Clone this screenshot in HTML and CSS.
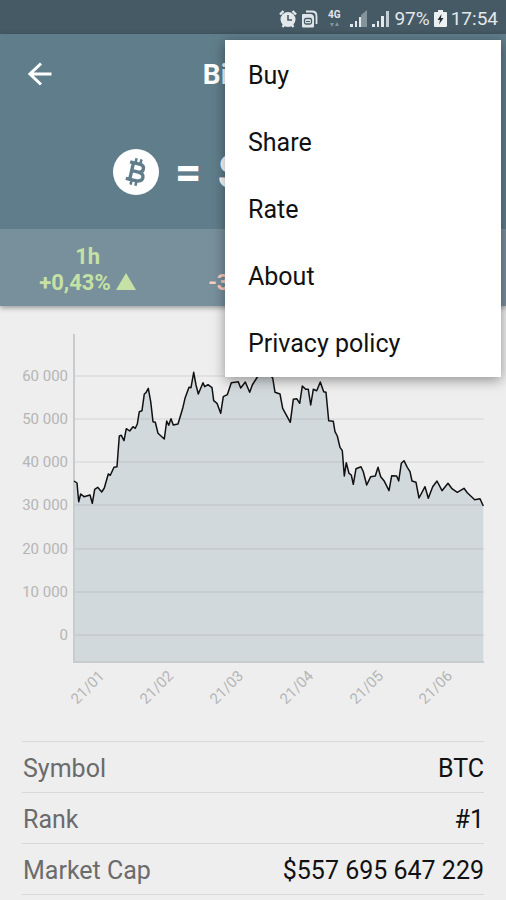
FILE: index.html
```html
<!DOCTYPE html>
<html lang="en">
<head>
	<meta charset="utf-8">
	<meta name="viewport" content="width=device-width, initial-scale=1">
	<title>Bitcoin</title>
	<link rel="stylesheet" href="styles.css">
</head>
<body>
	<div class="statusbar">
		<svg width="18" height="18" viewBox="0 0 18 18">
			<circle cx="9" cy="9.500" r="7.500" fill="#e3e8ea"/>
			<path d="M1 4.500L4.500 1M17 4.500L13.500 1M3.500 17l2-2.500M14.500 17l-2-2.500" stroke="#e3e8ea" stroke-width="2.400"/>
			<path d="M9 5v5h4" fill="none" stroke="#455a64" stroke-width="1.600"/>
		</svg>
		<svg width="17" height="18" viewBox="0 0 17 18">
			<path d="M5 1.500h6q4.500 0 4.500 4.500V14" fill="none" stroke="#dfe5e8" stroke-width="1.800"/>
			<path d="M2 4h7q4 0 4 4v8.500q0 1-1 1H2q-1 0-1-1V5q0-1 1-1z" fill="#dfe5e8"/>
			<rect x="3.500" y="8.500" width="7" height="5.500" rx="1.500" fill="none" stroke="#455a64" stroke-width="1.300"/>
			<path d="M5 11.500h4" stroke="#455a64"/>
		</svg>
		<span class="net">
			<b>4G</b>
			<svg width="9" height="5" viewBox="0 0 9 5"><path d="M0 1h4L2 5zM5 4h4L7 0z" fill="#84949b"/></svg>
		</span>
		<svg width="18" height="17" viewBox="0 0 18 17">
			<path d="M0 14h3v3H0zM5 11h2v6H5z" fill="#e3e8ea"/>
			<path d="M11 5l6-5v17h-6z" fill="#84949b"/>
			<path d="M9 7h2v10H9z" fill="#e3e8ea"/>
		</svg>
		<svg width="18" height="17" viewBox="0 0 18 17">
			<path d="M0 14h3v3H0zM5 11h2v6H5zM9 6h3v11H9z" fill="#e3e8ea"/>
			<path d="M14 1h3v16h-3z" fill="#c3cdd1"/>
		</svg>
		<span>97%</span>
		<svg width="13" height="17" viewBox="0 0 13 17">
			<path d="M4 0h5v2h3q1 0 1 1v13q0 1-1 1H1q-1 0-1-1V3q0-1 1-1h3z" fill="#eef1f2"/>
			<path d="M7.500 4L3.500 10h2.500l-1 4.500 4.500-6.500H7z" fill="#263238"/>
		</svg>
		<span>17:54</span>
	</div>

	<header class="header">
		<div class="toolbar">
			<button class="back" type="button" aria-label="Back">
				<svg width="24" height="24" viewBox="0 0 24 24"><path d="M23.500 12H2M13 1.500L2 12l11 10.500" fill="none" stroke="#fff" stroke-width="3"/></svg>
			</button>
			<h1 class="title">Bitcoin</h1>
		</div>
		<div class="price">
			<svg width="46" height="46" viewBox="0 0 46 46">
				<circle cx="23" cy="23" r="23" fill="#fff"/>
				<g transform="rotate(13 23 23)" fill="none" stroke="#607d8b">
					<path d="M15 14.500h9.500q5 0 5 4t-5 4H19M24.500 22.500q6.500 0 6.500 4.500t-6.500 4.500H14.500M18.500 14.500v17" stroke-width="3.400"/>
					<path d="M20.500 9.500v5M25.500 9.500v5M20.500 31v5.500M25.500 31v5.500" stroke-width="2.600"/>
				</g>
			</svg>
			<span>=</span>
			<span>$29 756</span>
		</div>
		<div class="changes">
			<div class="change up">
				<span>1h</span>
				<span>+0,43% <svg width="20" height="17" viewBox="0 0 20 17"><path d="M10 0l10 17H0z" fill="currentColor"/></svg></span>
			</div>
			<div class="change down">
				<span>24h</span>
				<span>-3,52% <svg width="20" height="17" viewBox="0 0 20 17"><path d="M0 0h20L10 17z" fill="currentColor"/></svg></span>
			</div>
			<div class="change down">
				<span>7d</span>
				<span>-9,18% <svg width="20" height="17" viewBox="0 0 20 17"><path d="M0 0h20L10 17z" fill="currentColor"/></svg></span>
			</div>
		</div>
	</header>

	<main class="content">
		<!-- plot area starts at 0,0; the y labels sit left of it -->
		<svg class="chart" viewBox="-52 0 462 384" role="img" aria-label="Bitcoin price, 21/01 to 21/06">
			<path class="area" d="M0 328V147L3 149 4.700 167.700 6.700 160 10 162.700 16 161 18.300 169.300 20.700 155.300 23.700 153.300 27.700 158 30.300 154 34.300 140 36.300 141.300 40 133.300 43 132.700 45.300 102 47.300 101.300 50 106.700 52.300 94.700 55.700 97 59 92.700 61.300 94.300 63.300 90 65.300 77.700 68 76.700 70.300 60 72 58.700 74.300 54.300 76.700 67.700 79 87.700 81.300 88.300 84 99.300 87 102 90.300 105 92.700 87 94.700 91.300 97 84.700 99.300 91 104 90 108.700 74.300 111 64.300 115 53.300 117 53.700 119.700 38.300 122 51 124.300 60 129 48.700 130.700 52.700 134 50.700 138 53.700 139.700 66.700 143 69.300 146.700 79.300 149.300 62.700 153.300 60.700 157.300 48.700 164.300 47.700 166.700 54 171.300 48 175.700 58.300 178.300 51 182.700 44 190 34 198.700 44 201 58.300 206 60 208.700 74.300 216.300 88.300 219.300 65.300 222.700 64.700 225.700 69.300 228.300 52 231.700 55.300 234.300 55.300 236.700 71 239.300 55.300 242.700 56.700 246.300 48 249.700 57.700 252 58.300 254.700 86.700 259.300 87.300 261 97.700 263.300 102 266 113.300 268.300 116.700 270.300 142 272.300 128.700 275 139.300 277.300 141 279.300 150.300 282 134.700 287 132.700 289.300 137.700 292.700 151 296.700 142.700 301.300 142 304 133.300 306.700 142.700 310 146.700 315 156.700 317.700 141.700 322.700 142 324.700 147 327.300 129.300 330 126.700 333.300 133.300 336 137.700 338 147 342 148.300 345 164 351 152.700 354.300 164.300 358.700 152.700 363 147 368 156.700 374 149.300 378 154.700 383.300 158.300 390 154.300 393.300 158.700 400.700 165.700 406 164.700 409.300 172V328z"/>
			<path class="grid" d="M0 42h410M0 85h410M0 128h410M0 171h410M0 215h410M0 258h410M0 301h410"/>
			<path class="axis" d="M0 0V328H410"/>
			<path class="line" d="M0 147L3 149 4.700 167.700 6.700 160 10 162.700 16 161 18.300 169.300 20.700 155.300 23.700 153.300 27.700 158 30.300 154 34.300 140 36.300 141.300 40 133.300 43 132.700 45.300 102 47.300 101.300 50 106.700 52.300 94.700 55.700 97 59 92.700 61.300 94.300 63.300 90 65.300 77.700 68 76.700 70.300 60 72 58.700 74.300 54.300 76.700 67.700 79 87.700 81.300 88.300 84 99.300 87 102 90.300 105 92.700 87 94.700 91.300 97 84.700 99.300 91 104 90 108.700 74.300 111 64.300 115 53.300 117 53.700 119.700 38.300 122 51 124.300 60 129 48.700 130.700 52.700 134 50.700 138 53.700 139.700 66.700 143 69.300 146.700 79.300 149.300 62.700 153.300 60.700 157.300 48.700 164.300 47.700 166.700 54 171.300 48 175.700 58.300 178.300 51 182.700 44 190 34 198.700 44 201 58.300 206 60 208.700 74.300 216.300 88.300 219.300 65.300 222.700 64.700 225.700 69.300 228.300 52 231.700 55.300 234.300 55.300 236.700 71 239.300 55.300 242.700 56.700 246.300 48 249.700 57.700 252 58.300 254.700 86.700 259.300 87.300 261 97.700 263.300 102 266 113.300 268.300 116.700 270.300 142 272.300 128.700 275 139.300 277.300 141 279.300 150.300 282 134.700 287 132.700 289.300 137.700 292.700 151 296.700 142.700 301.300 142 304 133.300 306.700 142.700 310 146.700 315 156.700 317.700 141.700 322.700 142 324.700 147 327.300 129.300 330 126.700 333.300 133.300 336 137.700 338 147 342 148.300 345 164 351 152.700 354.300 164.300 358.700 152.700 363 147 368 156.700 374 149.300 378 154.700 383.300 158.300 390 154.300 393.300 158.700 400.700 165.700 406 164.700 409.300 172"/>
			<g class="ylabels">
				<text x="-6" y="47">60 000</text>
				<text x="-6" y="90">50 000</text>
				<text x="-6" y="133">40 000</text>
				<text x="-6" y="176">30 000</text>
				<text x="-6" y="220">20 000</text>
				<text x="-6" y="263">10 000</text>
				<text x="-6" y="306">0</text>
			</g>
			<g class="xlabels">
				<text transform="translate(3 371) rotate(-45)">21/01</text>
				<text transform="translate(72 371) rotate(-45)">21/02</text>
				<text transform="translate(142 371) rotate(-45)">21/03</text>
				<text transform="translate(212 371) rotate(-45)">21/04</text>
				<text transform="translate(282 371) rotate(-45)">21/05</text>
				<text transform="translate(351 371) rotate(-45)">21/06</text>
			</g>
		</svg>

		<table class="info">
			<tr><th scope="row">Symbol</th><td>BTC</td></tr>
			<tr><th scope="row">Rank</th><td>#1</td></tr>
			<tr><th scope="row">Market Cap</th><td>$557 695 647 229</td></tr>
		</table>
	</main>

	<!-- overflow menu, opens over the toolbar -->
	<div class="menu">
		<button type="button">Buy</button>
		<button type="button">Share</button>
		<button type="button">Rate</button>
		<button type="button">About</button>
		<button type="button">Privacy policy</button>
	</div>
</body>
</html>
```
FILE: styles.css
```css
* {
	box-sizing: border-box;
}
body {
	margin: 0;
	position: relative;
	background: #eee;
	color: #111;
	font-family: Roboto, "Liberation Sans", sans-serif;
}
svg {
	flex: none;
}

/* status bar */
.statusbar {
	display: flex;
	justify-content: flex-end;
	align-items: center;
	gap: 4px;
	height: 34px;
	padding: 3px 8px 0 0;
	background: #455a64;
	color: #e3e8ea;
	font-size: 19px;
	line-height: 24px;
}
.net {
	display: flex;
	flex-direction: column;
	align-items: center;
	gap: 2px;
	width: 24px;
	font-size: 10px;
	line-height: 10px;
}

/* header */
.header {
	background: #607d8b;
	color: #fff;
	box-shadow: 0 2px 5px rgba(0, 0, 0, .35);
}
.toolbar {
	display: grid;
	grid-template-columns: 80px 1fr 92px;
	align-items: center;
	height: 80px;
}
.back {
	justify-self: center;
	padding: 0;
	border: 0;
	background: none;
	line-height: 0;
}
.title {
	margin: 0;
	padding-top: 2px;
	text-align: center;
	font-size: 28px;
	font-weight: 700;
	line-height: 34px;
}
.price {
	display: flex;
	justify-content: center;
	align-items: center;
	gap: 16px;
	height: 115px;
	padding-right: 6px;
	font-size: 46px;
	font-weight: 700;
}
.changes {
	display: grid;
	grid-template-columns: repeat(3, 1fr);
	height: 77px;
	padding: 15px 0 0 4px;
	background: #78909c;
}
.change {
	display: flex;
	flex-direction: column;
	align-items: center;
	font-size: 22px;
	font-weight: 700;
	line-height: 26px;
	white-space: nowrap;
}
.up {
	color: #c5e1a5;
}
.down {
	color: #ffccbc;
}

/* chart */
.content {
	padding: 28px 22px 0;
}
.chart {
	display: block;
	width: 100%;
	overflow: visible;
}
.area {
	fill: #d2d9dc;
}
.grid {
	stroke: #000;
	stroke-opacity: .05;
	stroke-width: 2;
}
.axis {
	fill: none;
	stroke: #c9cccd;
	stroke-width: 2;
}
.line {
	fill: none;
	stroke: #111;
	stroke-width: 1.5;
	stroke-linejoin: round;
}
.ylabels {
	fill: #b5b5b5;
	font-size: 15px;
	text-anchor: end;
}
.xlabels {
	fill: #b5b5b5;
	font-size: 15px;
}

/* coin details */
.info {
	width: 100%;
	margin-top: 23px;
	border-collapse: collapse;
	border-bottom: 1px solid #d8d8d8;
	font-size: 25px;
	line-height: 30px;
}
.info tr {
	height: 51px;
	border-top: 1px solid #d8d8d8;
}
.info th,
.info td {
	padding: 3px 0 0 1px;
	font-weight: 400;
}
.info th {
	text-align: left;
	color: #6b6b6b;
}
.info td {
	text-align: right;
}

/* menu */
.menu {
	position: absolute;
	top: 40px;
	right: 5px;
	display: flex;
	flex-direction: column;
	width: 276px;
	padding-top: 2px;
	background: #fff;
	box-shadow: 0 3px 12px rgba(0, 0, 0, .4);
}
.menu button {
	height: 67px;
	padding: 0 23px;
	border: 0;
	background: none;
	color: #111;
	font: 25px/30px Roboto, "Liberation Sans", sans-serif;
	text-align: left;
}
```
